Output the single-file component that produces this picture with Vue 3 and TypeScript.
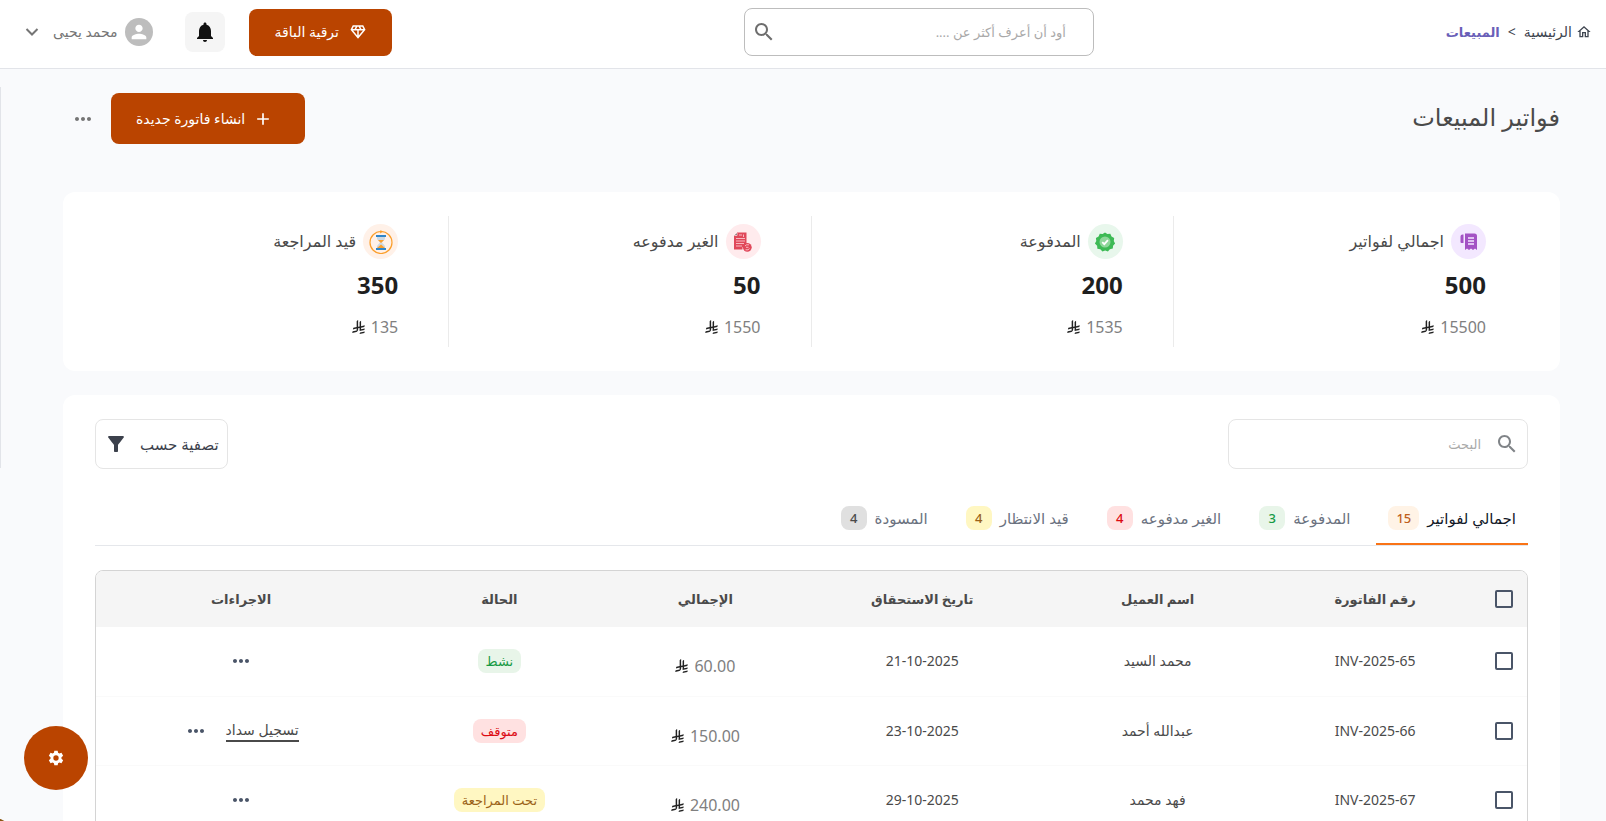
<script setup lang="ts">
import { ref } from 'vue'

type Tone = 'orange' | 'green' | 'red' | 'yellow' | 'grey'

interface Stat { icon: 'total' | 'paid' | 'unpaid' | 'review'; label: string; count: number; amount: number }
interface Tab { label: string; count: number; tone: Tone }
interface Invoice { id: string; client: string; due: string; total: string; status: string; tone: Tone; payable: boolean }

const stats: Stat[] = [
  { icon: 'total', label: 'اجمالي لفواتير', count: 500, amount: 15500 },
  { icon: 'paid', label: 'المدفوعة', count: 200, amount: 1535 },
  { icon: 'unpaid', label: 'الغير مدفوعه', count: 50, amount: 1550 },
  { icon: 'review', label: 'قيد المراجعة', count: 350, amount: 135 },
]

const tabs: Tab[] = [
  { label: 'اجمالي لفواتير', count: 15, tone: 'orange' },
  { label: 'المدفوعة', count: 3, tone: 'green' },
  { label: 'الغير مدفوعه', count: 4, tone: 'red' },
  { label: 'قيد الانتظار', count: 4, tone: 'yellow' },
  { label: 'المسودة', count: 4, tone: 'grey' },
]
const activeTab = ref(0)

const invoices: Invoice[] = [
  { id: 'INV-2025-65', client: 'محمد السيد', due: '21-10-2025', total: '60.00', status: 'نشط', tone: 'green', payable: false },
  { id: 'INV-2025-66', client: 'عبدالله أحمد', due: '23-10-2025', total: '150.00', status: 'متوقف', tone: 'red', payable: true },
  { id: 'INV-2025-67', client: 'فهد محمد', due: '29-10-2025', total: '240.00', status: 'تحت المراجعة', tone: 'yellow', payable: false },
]

const riyal = [
  'M699.62 1113.02c-20.06 44.48-33.32 92.75-38.4 143.37l424.51-90.24c20.06-44.47 33.31-92.75 38.4-143.37l-424.51 90.24Z',
  'M1085.73 895.8c20.06-44.47 33.32-92.75 38.4-143.37l-330.68 70.33v-135.2l292.27-62.11c20.06-44.47 33.32-92.75 38.4-143.37l-330.68 70.27V66.13c-50.67 28.45-95.67 66.32-132.25 110.99v403.35l-132.25 28.11V0c-50.67 28.44-95.67 66.32-132.25 110.99v525.69l-295.91 62.88c-20.06 44.47-33.33 92.75-38.42 143.37l334.33-71.05v170.26l-358.3 76.14c-20.06 44.47-33.32 92.75-38.4 143.37l375.04-79.7c30.53-6.35 56.77-24.4 73.83-49.24l68.78-101.97v-.02c7.14-10.55 11.3-23.27 11.3-36.97v-149.98l132.25-28.11v270.4l424.53-90.28Z',
]
const dots = 'M6 10c-1.1 0-2 .9-2 2s.9 2 2 2 2-.9 2-2-.9-2-2-2zm12 0c-1.1 0-2 .9-2 2s.9 2 2 2 2-.9 2-2-.9-2-2-2zm-6 0c-1.1 0-2 .9-2 2s.9 2 2 2 2-.9 2-2-.9-2-2-2z'
const magnifier = 'M15.5 14h-.79l-.28-.27C15.41 12.59 16 11.11 16 9.5 16 5.91 13.09 3 9.5 3S3 5.91 3 9.5 5.91 16 9.5 16c1.61 0 3.09-.59 4.23-1.57l.27.28v.79l5 4.99L20.49 19l-4.99-5zm-6 0C7.01 14 5 11.99 5 9.5S7.01 5 9.5 5 14 7.01 14 9.5 11.99 14 9.5 14z'
</script>

<template>
  <div class="page" dir="rtl" lang="ar">
    <header class="topbar">
      <nav class="crumbs" aria-label="مسار التنقل">
        <a href="#" class="home">
          <svg class="i16" viewBox="0 0 24 24"><path d="M12 5.69l5 4.5V18h-2v-6H9v6H7v-7.81l5-4.5M12 3L2 12h3v8h6v-6h2v6h6v-8h3L12 3z" /></svg>
          <span>الرئيسية</span>
        </a>
        <span class="sep" dir="ltr">&lt;</span>
        <a href="#" class="here">المبيعات</a>
      </nav>

      <div class="ask">
        <input type="search" aria-label="أود أن أعرف أكثر عن" placeholder="أود أن أعرف أكثر عن ...." />
        <button type="button" aria-label="بحث"><svg class="i24" viewBox="0 0 24 24"><path :d="magnifier" /></svg></button>
      </div>

      <div class="account">
        <button type="button" class="primary upgrade">
          <svg class="i18" viewBox="0 0 24 24"><path d="M19 3H5L2 9l10 12L22 9l-3-6zM9.62 8l1.5-3h1.76l1.5 3H9.62zM11 10v6.68L5.44 10H11zm2 0h5.56L13 16.68V10zm6.26-2h-2.65l-1.5-3h2.65l1.5 3zM6.24 5h2.65l-1.5 3H4.74l1.5-3z" /></svg>
          <span>ترقية الباقة</span>
        </button>
        <button type="button" class="bell" aria-label="الإشعارات">
          <svg class="i24" viewBox="0 0 24 24"><path d="M12 22c1.1 0 2-.9 2-2h-4c0 1.1.89 2 2 2zm6-6v-5c0-3.07-1.64-5.64-4.5-6.32V4c0-.83-.67-1.5-1.5-1.5s-1.5.67-1.5 1.5v.68C7.63 5.36 6 7.92 6 11v5l-2 2v1h16v-1l-2-2z" /></svg>
        </button>
        <button type="button" class="user">
          <span class="avatar"><svg class="i22" viewBox="0 0 24 24"><path d="M12 12c2.21 0 4-1.79 4-4s-1.79-4-4-4-4 1.79-4 4 1.79 4 4 4zm0 2c-2.67 0-8 1.34-8 4v2h16v-2c0-2.66-5.33-4-8-4z" /></svg></span>
          <span class="name">محمد يحيى</span>
          <svg class="chev" viewBox="0 0 14 10"><path d="M1.500 2 7 7.500 12.500 2" /></svg>
        </button>
      </div>
    </header>

    <main>
      <div class="heading">
        <h1>فواتير المبيعات</h1>
        <div class="heading-actions">
          <button type="button" class="primary create">
            <svg class="i20" viewBox="0 0 24 24"><path d="M19 13h-6v6h-2v-6H5v-2h6V5h2v6h6v2z" /></svg>
            <span>انشاء فاتورة جديدة</span>
          </button>
          <button type="button" class="plain more" aria-label="المزيد"><svg class="i24" viewBox="0 0 24 24"><path :d="dots" /></svg></button>
        </div>
      </div>

      <section class="card stats">
        <article v-for="s in stats" :key="s.icon" class="stat">
          <div class="stat-head">
            <span class="disc" :class="s.icon">
              <svg v-if="s.icon === 'total'" class="i20" viewBox="0 0 20 20">
                <path fill="#a352c4" d="M6 1.500h9.500A2.500 2.500 0 0 1 18 4v14l-2-1.600-2 1.600-2-1.600-2 1.600-2-1.600L6 18Z" /><path fill="#a352c4" d="M4.500 2.500V11H2.500a1 1 0 0 1-1-1V4.500a2 2 0 0 1 2-2Z" />
                <path stroke="#f3e8ff" stroke-width="1.300" d="M9 6h6M9 9h6M9 12h6" />
              </svg>
              <svg v-else-if="s.icon === 'paid'" class="i22" viewBox="0 0 24 24">
                <path fill="#3dba55" d="m12 1.500 2.600 1.900 3.200-.3 1.300 3 2.900 1.500-.4 3.200L23 13.600l-2.200 2.400-.3 3.200-3.200.7-2.100 2.500-3-1.100-3 1.100-2.300-2.400-3.200-.7-.3-3.200L1 13.600l1.500-2.800-.4-3.200L5 6.100l1.300-3 3.100.3Z" />
                <circle cx="12" cy="12" r="6" fill="#8ed79a" /><path fill="none" stroke="#fff" stroke-width="2" d="m9 12.200 2.200 2.100 4-4.300" />
              </svg>
              <svg v-else-if="s.icon === 'unpaid'" class="i20" viewBox="0 0 20 20">
                <path fill="#e0485a" d="M4 .5h9.500V15H9.500v2.500H1V3.500h2V2h1Z" />
                <path stroke="#ffd5da" stroke-width=".8" d="M4 1v2.500H1.500M6 3h3M3 6.500h9M3 9h9M3 11.500h8M3 14h6M10.500 2.500v2.500" />
                <circle cx="14.300" cy="15.300" r="4.400" fill="#e0485a" /><path fill="none" stroke="#ffc4cb" stroke-width=".9" d="m12 14 1.500-1.200h2.500M16.500 16.500l-1.500 1.300h-2.500M13 15.300h2.500" />
              </svg>
              <svg v-else class="i24" viewBox="0 0 24 24">
                <circle cx="12" cy="12.500" r="11" fill="none" stroke="#fb9f2c" stroke-width="1.200" /><path fill="#fb9f2c" d="m11.500 0 2.500 1.700-3 1.700Z" />
                <path fill="#ccd9e4" d="M8 6h8v3l-3 3.500 3 3.500v3H8v-3l3-3.500L8 9Z" /><path fill="#fb9f2c" d="M9 10h6l-3 3ZM12 14.500l4 3.500H8Z" />
                <path fill="#2f86c9" d="M7 5h10v2H7zM7 18h10v2H7z" />
              </svg>
            </span>
            <h2>{{ s.label }}</h2>
          </div>
          <strong>{{ s.count }}</strong>
          <p class="money"><span>{{ s.amount }}</span><svg class="riyal" viewBox="0 0 1124 1257" aria-label="ريال"><path v-for="d in riyal" :key="d" :d="d" /></svg></p>
        </article>
      </section>

      <section class="card list">
        <div class="tools">
          <label class="find">
            <svg class="i24" viewBox="0 0 24 24"><path :d="magnifier" /></svg>
            <input type="search" aria-label="البحث" placeholder="البحث" />
          </label>
          <button type="button" class="filter">
            <span>تصفية حسب</span>
            <svg class="i24" viewBox="0 0 24 24"><path d="M4.250 5.610C6.270 8.200 10 13 10 13v6c0 .55.45 1 1 1h2c.55 0 1-.45 1-1v-6s3.720-4.800 5.740-7.390c.51-.66.04-1.610-.79-1.610H5.040c-.83 0-1.300.95-.79 1.610z" /></svg>
          </button>
        </div>

        <div class="tabs" role="tablist">
          <button v-for="(t, i) in tabs" :key="t.label" type="button" role="tab" class="tab" :class="{ active: i === activeTab }" :aria-selected="i === activeTab" @click="activeTab = i">
            <span>{{ t.label }}</span><span class="pill count" :class="t.tone">{{ t.count }}</span>
          </button>
        </div>

        <div class="frame">
          <table>
            <colgroup><col class="c-check" /><col class="c-id" /><col class="c-client" /><col class="c-due" /><col class="c-total" /><col class="c-status" /><col class="c-actions" /></colgroup>
            <thead>
              <tr>
                <th><input type="checkbox" aria-label="تحديد الكل" /></th>
                <th>رقم الفاتورة</th><th>اسم العميل</th><th>تاريخ الاستحقاق</th><th>الإجمالي</th><th>الحالة</th><th>الاجراءات</th>
              </tr>
            </thead>
            <tbody>
              <tr v-for="v in invoices" :key="v.id">
                <td><input type="checkbox" :aria-label="v.id" /></td>
                <td>{{ v.id }}</td>
                <td>{{ v.client }}</td>
                <td>{{ v.due }}</td>
                <td class="sum"><p class="money"><span>{{ v.total }}</span><svg class="riyal" viewBox="0 0 1124 1257" aria-label="ريال"><path v-for="d in riyal" :key="d" :d="d" /></svg></p></td>
                <td><span class="pill" :class="v.tone">{{ v.status }}</span></td>
                <td>
                  <div class="row-actions">
                    <a v-if="v.payable" href="#">تسجيل سداد</a>
                    <button type="button" class="plain" aria-label="المزيد"><svg class="i24" viewBox="0 0 24 24"><path :d="dots" /></svg></button>
                  </div>
                </td>
              </tr>
            </tbody>
          </table>
        </div>
      </section>
    </main>

    <span class="edge"></span>
    <span class="corner"></span>
    <button type="button" class="settings" aria-label="الإعدادات">
      <svg class="i16" viewBox="0 0 24 24"><path fill-rule="evenodd" d="M9.500 1h5l.6 3.200 2 1.200 3.100-1.100 2.500 4.400-2.500 2.100v2.400l2.500 2.100-2.500 4.400-3.100-1.100-2 1.200-.6 3.200h-5l-.6-3.200-2-1.200-3.100 1.100-2.500-4.400 2.500-2.100v-2.400L1.300 8.700l2.500-4.400 3.100 1.100 2-1.200ZM12 8a4 4 0 1 0 0 8 4 4 0 0 0 0-8Z" /></svg>
    </button>
  </div>
</template>

<style>
body { margin: 0; background: #f9fafc; }
</style>

<style scoped>
* { box-sizing: border-box; }
.page { height: 100vh; overflow: hidden; background: #f9fafc; color: #4a4a4a; font-family: "Noto Sans", "DejaVu Sans", sans-serif; font-size: 14px; line-height: 24px; }
h1, h2, p { margin: 0; font-weight: 400; }
button, input { font: inherit; color: inherit; }
button { border: 0; padding: 0; background: none; cursor: pointer; white-space: nowrap; }
a { color: inherit; text-decoration: none; }
svg { display: block; flex: none; fill: currentColor; }
.i16 { width: 16px; height: 16px; }
.i18 { width: 18px; height: 18px; }
.i20 { width: 20px; height: 20px; }
.i22 { width: 22px; height: 22px; }
.i24 { width: 24px; height: 24px; }

.topbar { display: flex; align-items: center; justify-content: space-between; height: 69px; padding: 0 14px 4px 24px; background: #fff; border-bottom: 1px solid #e2e4e9; }
.crumbs { display: flex; align-items: center; gap: 8px; color: #3f4650; }
.home { display: flex; align-items: center; gap: 4px; }
.here { color: #6a5fb8; font-size: 13px; font-weight: 700; }
.ask { display: flex; align-items: center; width: 350px; height: 48px; padding-inline: 27px 7px; border: 1px solid #bdbdbd; border-radius: 8px; }
.ask input { flex: 1; min-width: 0; border: 0; padding: 0; outline: 0; background: none; }
.ask button { color: #6e6e6e; }
input::placeholder { color: #a9a9a9; font-size: 13px; opacity: 1; }
.account { display: flex; align-items: center; }
.primary { display: flex; align-items: center; border-radius: 8px; background: #ba4400; color: #fff; }
.upgrade { gap: 10px; height: 47px; padding-inline: 25px; }
.bell { display: grid; place-items: center; width: 40px; height: 40px; margin-inline: 24px 32px; border-radius: 8px; background: #f5f5f5; color: #111; }
.user { display: flex; align-items: center; gap: 8px; color: #757575; }
.avatar { display: grid; place-items: center; width: 28px; height: 28px; border-radius: 50%; background: #bdbdbd; color: #fff; }
.chev { width: 14px; height: 10px; margin-inline: 6px 1px; fill: none; stroke: currentColor; stroke-width: 2; }

main { padding: 24px 46px 0 63px; }
.heading { display: flex; align-items: center; justify-content: space-between; height: 51px; margin-bottom: 48px; }
h1 { padding-bottom: 4px; font-size: 24px; line-height: 36px; }
.heading-actions { display: flex; align-items: center; gap: 16px; }
.create { gap: 8px; height: 51px; padding-inline: 32px 25px; }
.plain { display: grid; place-items: center; color: #4a5568; }
.more { color: #757575; margin-inline-end: 8px; }

.card { border-radius: 12px; background: #fff; }
.stats { display: grid; grid-template-columns: repeat(4, 1fr); padding: 24px; margin-bottom: 24px; }
.stat { display: flex; flex-direction: column; align-items: flex-start; height: 131px; padding: 8px 50px 0; }
.stat + .stat { border-inline-start: 1px solid #ebebeb; }
.stat-head { display: flex; align-items: center; gap: 7px; }
.disc { display: grid; place-items: center; width: 35px; height: 35px; border-radius: 50%; }
.total { background: #f3e8ff; }
.paid { background: #e8f7ec; }
.unpaid { background: #ffebed; }
.review { background: #fff1e8; }
h2 { padding-bottom: 2px; font-size: 16px; line-height: 24px; }
.stat strong { margin-top: 9px; color: #1f1f1f; font-size: 24px; line-height: 34px; }
.money { display: flex; align-items: center; gap: 6px; color: #808080; font-size: 16px; line-height: 24px; }
.stat .money { margin-top: 13px; }
.riyal { width: 13px; height: 14px; fill: #222; }

.list { padding: 24px 32px; }
.tools { display: flex; justify-content: space-between; }
.find { display: flex; align-items: center; gap: 14px; width: 300px; height: 50px; padding-inline: 8px; border: 1px solid #e5e5e5; border-radius: 8px; color: #808488; }
.find input { width: 100%; border: 0; padding: 0; outline: 0; background: none; }
.filter { display: flex; align-items: center; gap: 12px; height: 50px; padding-inline: 8px; border: 1px solid #e5e5e5; border-radius: 8px; color: #3c414c; font-size: 15px; }
.tabs { display: flex; gap: 14px; margin: 24px 0; height: 53px; border-bottom: 1px solid #e5e7eb; }
.tab { display: flex; align-items: center; gap: 8px; height: 52px; padding-inline: 12px; border-bottom: 2px solid transparent; color: #6b7280; font-size: 15px; }
.tab.active { border-color: #f97316; color: #111827; }
.pill { display: inline-block; height: 24px; padding-inline: 8px; border-radius: 8px; font-size: 13px; line-height: 24px; font-weight: 500; }
.count { min-width: 26px; text-align: center; }
.orange { background: #fff3e6; color: #c05f1c; }
.green { background: #e8f5e9; color: #179a45; }
.red { background: #ffe1e1; color: #dc0a12; }
.yellow { background: #fff7c2; color: #9a6218; }
.grey { background: #e0e0e0; color: #4a4a4a; }

.frame { overflow: hidden; border: 1px solid #d4d4d4; border-radius: 8px; }
table { width: 100%; table-layout: fixed; border-collapse: collapse; text-align: center; }
.c-check { width: 46px; }
.c-id { width: 14.8%; }
.c-client { width: 15.6%; }
.c-due { width: 17.3%; }
.c-total { width: 13%; }
.c-status { width: 15.8%; }
th, td { padding: 0; white-space: nowrap; }
th { height: 56px; background: #f5f5f5; font-size: 13px; font-weight: 700; }
td { height: 69px; border-bottom: 1px solid #fafafa; }
input[type="checkbox"] { display: block; appearance: none; width: 18px; height: 18px; margin: 0 auto; border: 2px solid #4a5568; border-radius: 2px; }
.sum { padding-top: 10px; }
td .money { justify-content: center; }
.row-actions { display: flex; align-items: center; justify-content: center; gap: 18px; }
.row-actions a { border-bottom: 2px solid #4a4a4a; line-height: 20px; }

.edge { position: fixed; left: 0; top: 87px; width: 1px; height: 381px; background: #e2e4e9; }
.corner { position: fixed; left: -39px; bottom: -54px; width: 58px; height: 58px; border-radius: 50%; background: #8a5510; }
.settings { position: fixed; left: 24px; bottom: 31px; display: grid; place-items: center; width: 64px; height: 64px; border-radius: 50%; background: #ba4400; color: #fff; }
</style>
